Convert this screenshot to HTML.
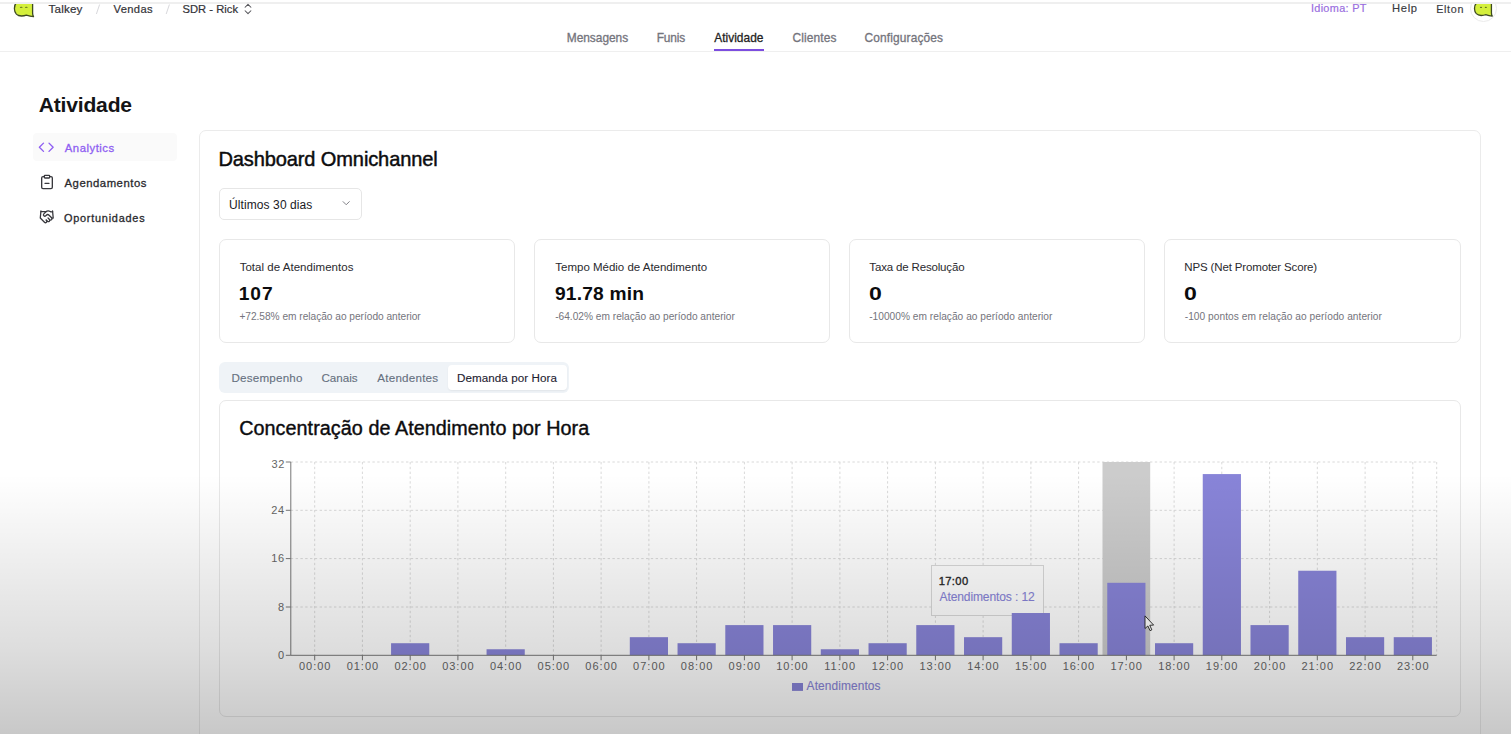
<!DOCTYPE html>
<html><head><meta charset="utf-8"><style>
html,body{margin:0;padding:0;}
body{width:1511px;height:734px;overflow:hidden;position:relative;background:#fff;font-family:"Liberation Sans",sans-serif;}
.abs{position:absolute;}
.t{position:absolute;white-space:nowrap;}
.ax{color:#666;}
</style></head><body>
<!-- top strip -->
<div class="abs" style="left:0;top:51px;width:1511px;height:1px;background:#efefef"></div>
<!-- logo -->
<svg class="abs" style="left:0;top:0" width="40" height="20" viewBox="0 0 40 20">
<path d="M16.8,2 C15,4 14.4,6.2 14.4,8.6 C14.4,13 17.3,16 21.5,16 C23.5,16 25.3,15.6 26.3,15.2 C28.5,15.9 31,16.5 33.5,16.6 C32.9,15.6 32.6,14.6 32.6,13 L32.6,2 Z" fill="#d4ef3c" stroke="#3e4a22" stroke-width="1.3" stroke-linejoin="round"/>
<ellipse cx="21.2" cy="7.2" rx="1.4" ry="0.55" fill="#56661e"/><ellipse cx="26.3" cy="7.2" rx="1.4" ry="0.55" fill="#56661e"/>
</svg>
<div class="abs" style="left:0;top:0;width:1511px;height:2px;background:#fff"></div>
<div class="abs" style="left:0;top:2px;width:1511px;height:2px;background:#efefef"></div>
<!-- separators -->
<svg class="abs" style="left:90px;top:0" width="90" height="20"><line x1="99.6" y1="4.5" x2="96.4" y2="14" stroke="#d8d8dc" stroke-width="1" transform="translate(-90,0)"/><line x1="169.4" y1="4.5" x2="166.2" y2="14" stroke="#d8d8dc" stroke-width="1" transform="translate(-90,0)"/></svg>
<!-- chevron updown -->
<svg class="abs" style="left:240.8px;top:1.6px" width="14" height="14" viewBox="0 0 24 24" fill="none" stroke="#55555a" stroke-width="1.8" stroke-linecap="round" stroke-linejoin="round"><path d="m7 15 5 5 5-5"/><path d="m7 9 5-5 5 5"/></svg>
<!-- avatar -->
<div class="abs" style="left:1469.7px;top:-5.5px;width:25.8px;height:25.8px;border:1px solid #ebebeb;border-radius:50%"></div>
<svg class="abs" style="left:1460px;top:0" width="40" height="20" viewBox="0 0 40 20">
<g transform="translate(14.5,0.6) scale(0.93) translate(-14.4,0)"><path d="M16.8,2 C15,4 14.4,6.2 14.4,8.6 C14.4,13 17.3,16 21.5,16 C23.5,16 25.3,15.6 26.3,15.2 C28.5,15.9 31,16.5 33.5,16.6 C32.9,15.6 32.6,14.6 32.6,13 L32.6,2 Z" fill="#d4ef3c" stroke="#3e4a22" stroke-width="1.4" stroke-linejoin="round"/>
<ellipse cx="21.4" cy="7.2" rx="1.2" ry="0.65" fill="#56661e"/><ellipse cx="26.6" cy="7.2" rx="1.2" ry="0.65" fill="#56661e"/></g>
</svg>
<div class="abs" style="left:1460px;top:0;width:51px;height:2px;background:#fff"></div>
<div class="abs" style="left:1460px;top:2px;width:51px;height:2px;background:#efefef"></div>
<!-- nav underline -->
<div class="abs" style="left:714px;top:49px;width:50px;height:2px;background:#7c4ddf"></div>
<!-- sidebar active -->
<div class="abs" style="left:33px;top:133px;width:144px;height:28px;background:#fafafa;border-radius:4px"></div>
<svg class="abs" style="left:38.3px;top:139.2px" width="16.5" height="16.5" viewBox="0 0 24 24" fill="none" stroke="#8f5ff2" stroke-width="2" stroke-linecap="round" stroke-linejoin="round"><polyline points="16 18 22 12 16 6"/><polyline points="8 6 2 12 8 18"/></svg>
<svg class="abs" style="left:38.5px;top:174.4px" width="16" height="16" viewBox="0 0 24 24" fill="none" stroke="#38383d" stroke-width="2" stroke-linecap="round" stroke-linejoin="round"><rect width="8" height="4" x="8" y="2" rx="1" ry="1"/><path d="M16 4h2a2 2 0 0 1 2 2v14a2 2 0 0 1-2 2H6a2 2 0 0 1-2-2V6a2 2 0 0 1 2-2h2"/><path d="M9 14h6"/></svg>
<svg class="abs" style="left:39.1px;top:209.2px" width="15.5" height="15.5" viewBox="0 0 24 24" fill="none" stroke="#38383d" stroke-width="2" stroke-linecap="round" stroke-linejoin="round"><path d="m11 17 2 2a1 1 0 1 0 3-3"/><path d="m14 14 2.5 2.5a1 1 0 1 0 3-3l-3.88-3.88a3 3 0 0 0-4.24 0l-.88.88a1 1 0 1 1-3-3l2.81-2.81a5.79 5.79 0 0 1 7.06-.87l.47.28a2 2 0 0 0 1.42.25L21 4"/><path d="m21 3 1 11h-2"/><path d="M3 3 2 14l6.5 6.5a1 1 0 1 0 3-3"/><path d="M3 4h8"/></svg>
<!-- main card -->
<div class="abs" style="left:199px;top:130px;width:1280px;height:620px;border:1px solid #ebebeb;border-radius:7px"></div>
<!-- select -->
<div class="abs" style="left:219px;top:188px;width:141px;height:30px;border:1px solid #e6e6e6;border-radius:5px"></div>
<svg class="abs" style="left:339.6px;top:197.4px" width="12.4" height="12.4" viewBox="0 0 24 24" fill="none" stroke="#77777d" stroke-width="1.8" stroke-linecap="round" stroke-linejoin="round"><path d="m6 9 6 6 6-6"/></svg>
<!-- KPI cards -->
<div class="abs" style="left:219px;top:239px;width:294px;height:102px;border:1px solid #e8e8e8;border-radius:7px"></div>
<div class="abs" style="left:534px;top:239px;width:294px;height:102px;border:1px solid #e8e8e8;border-radius:7px"></div>
<div class="abs" style="left:849px;top:239px;width:294px;height:102px;border:1px solid #e8e8e8;border-radius:7px"></div>
<div class="abs" style="left:1164px;top:239px;width:295px;height:102px;border:1px solid #e8e8e8;border-radius:7px"></div>
<!-- tabs -->
<div class="abs" style="left:219px;top:362px;width:350px;height:31px;background:#eff3f7;border-radius:6px"></div>
<div class="abs" style="left:448px;top:365px;width:119px;height:25px;background:#fff;border-radius:4px;box-shadow:0 1px 2px rgba(0,0,0,0.06)"></div>
<!-- chart card -->
<div class="abs" style="left:219px;top:400px;width:1240px;height:315px;border:1px solid #e8e8e8;border-radius:7px"></div>
<svg class="abs" style="left:0;top:0" width="1511" height="734" viewBox="0 0 1511 734">
<line x1="290.8" y1="462.0" x2="1436.7" y2="462.0" stroke="#d9d9d9" stroke-dasharray="2.4 2.4" stroke-width="1"/>
<line x1="290.8" y1="510.3" x2="1436.7" y2="510.3" stroke="#d9d9d9" stroke-dasharray="2.4 2.4" stroke-width="1"/>
<line x1="290.8" y1="558.6" x2="1436.7" y2="558.6" stroke="#d9d9d9" stroke-dasharray="2.4 2.4" stroke-width="1"/>
<line x1="290.8" y1="607.0" x2="1436.7" y2="607.0" stroke="#d9d9d9" stroke-dasharray="2.4 2.4" stroke-width="1"/>
<line x1="314.7" y1="462.0" x2="314.7" y2="655.3" stroke="#d9d9d9" stroke-dasharray="2.4 2.4" stroke-width="1"/>
<line x1="362.4" y1="462.0" x2="362.4" y2="655.3" stroke="#d9d9d9" stroke-dasharray="2.4 2.4" stroke-width="1"/>
<line x1="410.2" y1="462.0" x2="410.2" y2="655.3" stroke="#d9d9d9" stroke-dasharray="2.4 2.4" stroke-width="1"/>
<line x1="457.9" y1="462.0" x2="457.9" y2="655.3" stroke="#d9d9d9" stroke-dasharray="2.4 2.4" stroke-width="1"/>
<line x1="505.7" y1="462.0" x2="505.7" y2="655.3" stroke="#d9d9d9" stroke-dasharray="2.4 2.4" stroke-width="1"/>
<line x1="553.4" y1="462.0" x2="553.4" y2="655.3" stroke="#d9d9d9" stroke-dasharray="2.4 2.4" stroke-width="1"/>
<line x1="601.1" y1="462.0" x2="601.1" y2="655.3" stroke="#d9d9d9" stroke-dasharray="2.4 2.4" stroke-width="1"/>
<line x1="648.9" y1="462.0" x2="648.9" y2="655.3" stroke="#d9d9d9" stroke-dasharray="2.4 2.4" stroke-width="1"/>
<line x1="696.6" y1="462.0" x2="696.6" y2="655.3" stroke="#d9d9d9" stroke-dasharray="2.4 2.4" stroke-width="1"/>
<line x1="744.4" y1="462.0" x2="744.4" y2="655.3" stroke="#d9d9d9" stroke-dasharray="2.4 2.4" stroke-width="1"/>
<line x1="792.1" y1="462.0" x2="792.1" y2="655.3" stroke="#d9d9d9" stroke-dasharray="2.4 2.4" stroke-width="1"/>
<line x1="839.9" y1="462.0" x2="839.9" y2="655.3" stroke="#d9d9d9" stroke-dasharray="2.4 2.4" stroke-width="1"/>
<line x1="887.6" y1="462.0" x2="887.6" y2="655.3" stroke="#d9d9d9" stroke-dasharray="2.4 2.4" stroke-width="1"/>
<line x1="935.4" y1="462.0" x2="935.4" y2="655.3" stroke="#d9d9d9" stroke-dasharray="2.4 2.4" stroke-width="1"/>
<line x1="983.1" y1="462.0" x2="983.1" y2="655.3" stroke="#d9d9d9" stroke-dasharray="2.4 2.4" stroke-width="1"/>
<line x1="1030.9" y1="462.0" x2="1030.9" y2="655.3" stroke="#d9d9d9" stroke-dasharray="2.4 2.4" stroke-width="1"/>
<line x1="1078.6" y1="462.0" x2="1078.6" y2="655.3" stroke="#d9d9d9" stroke-dasharray="2.4 2.4" stroke-width="1"/>
<line x1="1126.4" y1="462.0" x2="1126.4" y2="655.3" stroke="#d9d9d9" stroke-dasharray="2.4 2.4" stroke-width="1"/>
<line x1="1174.1" y1="462.0" x2="1174.1" y2="655.3" stroke="#d9d9d9" stroke-dasharray="2.4 2.4" stroke-width="1"/>
<line x1="1221.8" y1="462.0" x2="1221.8" y2="655.3" stroke="#d9d9d9" stroke-dasharray="2.4 2.4" stroke-width="1"/>
<line x1="1269.6" y1="462.0" x2="1269.6" y2="655.3" stroke="#d9d9d9" stroke-dasharray="2.4 2.4" stroke-width="1"/>
<line x1="1317.3" y1="462.0" x2="1317.3" y2="655.3" stroke="#d9d9d9" stroke-dasharray="2.4 2.4" stroke-width="1"/>
<line x1="1365.1" y1="462.0" x2="1365.1" y2="655.3" stroke="#d9d9d9" stroke-dasharray="2.4 2.4" stroke-width="1"/>
<line x1="1412.8" y1="462.0" x2="1412.8" y2="655.3" stroke="#d9d9d9" stroke-dasharray="2.4 2.4" stroke-width="1"/>
<line x1="1436.7" y1="462.0" x2="1436.7" y2="655.3" stroke="#d9d9d9" stroke-dasharray="2.4 2.4" stroke-width="1"/>
<rect x="1102.5" y="462.0" width="47.7" height="193.3" fill="#cccccc"/>
</svg>
<!-- tooltip -->
<div class="abs" style="left:931px;top:565px;width:111px;height:49px;background:#fff;border:1px solid #d9d9d9"></div>
<svg class="abs" style="left:0;top:0" width="1511" height="734" viewBox="0 0 1511 734">
<rect x="391.07" y="643.22" width="38.20" height="12.08" fill="#8884d8"/>
<rect x="486.56" y="649.26" width="38.20" height="6.04" fill="#8884d8"/>
<rect x="629.80" y="637.18" width="38.20" height="18.12" fill="#8884d8"/>
<rect x="677.54" y="643.22" width="38.20" height="12.08" fill="#8884d8"/>
<rect x="725.29" y="625.10" width="38.20" height="30.20" fill="#8884d8"/>
<rect x="773.03" y="625.10" width="38.20" height="30.20" fill="#8884d8"/>
<rect x="820.78" y="649.26" width="38.20" height="6.04" fill="#8884d8"/>
<rect x="868.52" y="643.22" width="38.20" height="12.08" fill="#8884d8"/>
<rect x="916.27" y="625.10" width="38.20" height="30.20" fill="#8884d8"/>
<rect x="964.02" y="637.18" width="38.20" height="18.12" fill="#8884d8"/>
<rect x="1011.76" y="613.02" width="38.20" height="42.28" fill="#8884d8"/>
<rect x="1059.51" y="643.22" width="38.20" height="12.08" fill="#8884d8"/>
<rect x="1107.25" y="582.81" width="38.20" height="72.49" fill="#8884d8"/>
<rect x="1155.00" y="643.22" width="38.20" height="12.08" fill="#8884d8"/>
<rect x="1202.75" y="474.08" width="38.20" height="181.22" fill="#8884d8"/>
<rect x="1250.49" y="625.10" width="38.20" height="30.20" fill="#8884d8"/>
<rect x="1298.24" y="570.73" width="38.20" height="84.57" fill="#8884d8"/>
<rect x="1345.98" y="637.18" width="38.20" height="18.12" fill="#8884d8"/>
<rect x="1393.73" y="637.18" width="38.20" height="18.12" fill="#8884d8"/>
<line x1="290.8" y1="462.0" x2="290.8" y2="655.3" stroke="#777" stroke-width="1"/>
<line x1="290.8" y1="655.3" x2="1436.7" y2="655.3" stroke="#777" stroke-width="1"/>
<line x1="285.8" y1="462.0" x2="290.8" y2="462.0" stroke="#777" stroke-width="1"/>
<line x1="285.8" y1="510.3" x2="290.8" y2="510.3" stroke="#777" stroke-width="1"/>
<line x1="285.8" y1="558.6" x2="290.8" y2="558.6" stroke="#777" stroke-width="1"/>
<line x1="285.8" y1="607.0" x2="290.8" y2="607.0" stroke="#777" stroke-width="1"/>
<line x1="285.8" y1="655.3" x2="290.8" y2="655.3" stroke="#777" stroke-width="1"/>
<line x1="314.7" y1="655.3" x2="314.7" y2="660.3" stroke="#777" stroke-width="1"/>
<line x1="362.4" y1="655.3" x2="362.4" y2="660.3" stroke="#777" stroke-width="1"/>
<line x1="410.2" y1="655.3" x2="410.2" y2="660.3" stroke="#777" stroke-width="1"/>
<line x1="457.9" y1="655.3" x2="457.9" y2="660.3" stroke="#777" stroke-width="1"/>
<line x1="505.7" y1="655.3" x2="505.7" y2="660.3" stroke="#777" stroke-width="1"/>
<line x1="553.4" y1="655.3" x2="553.4" y2="660.3" stroke="#777" stroke-width="1"/>
<line x1="601.1" y1="655.3" x2="601.1" y2="660.3" stroke="#777" stroke-width="1"/>
<line x1="648.9" y1="655.3" x2="648.9" y2="660.3" stroke="#777" stroke-width="1"/>
<line x1="696.6" y1="655.3" x2="696.6" y2="660.3" stroke="#777" stroke-width="1"/>
<line x1="744.4" y1="655.3" x2="744.4" y2="660.3" stroke="#777" stroke-width="1"/>
<line x1="792.1" y1="655.3" x2="792.1" y2="660.3" stroke="#777" stroke-width="1"/>
<line x1="839.9" y1="655.3" x2="839.9" y2="660.3" stroke="#777" stroke-width="1"/>
<line x1="887.6" y1="655.3" x2="887.6" y2="660.3" stroke="#777" stroke-width="1"/>
<line x1="935.4" y1="655.3" x2="935.4" y2="660.3" stroke="#777" stroke-width="1"/>
<line x1="983.1" y1="655.3" x2="983.1" y2="660.3" stroke="#777" stroke-width="1"/>
<line x1="1030.9" y1="655.3" x2="1030.9" y2="660.3" stroke="#777" stroke-width="1"/>
<line x1="1078.6" y1="655.3" x2="1078.6" y2="660.3" stroke="#777" stroke-width="1"/>
<line x1="1126.4" y1="655.3" x2="1126.4" y2="660.3" stroke="#777" stroke-width="1"/>
<line x1="1174.1" y1="655.3" x2="1174.1" y2="660.3" stroke="#777" stroke-width="1"/>
<line x1="1221.8" y1="655.3" x2="1221.8" y2="660.3" stroke="#777" stroke-width="1"/>
<line x1="1269.6" y1="655.3" x2="1269.6" y2="660.3" stroke="#777" stroke-width="1"/>
<line x1="1317.3" y1="655.3" x2="1317.3" y2="660.3" stroke="#777" stroke-width="1"/>
<line x1="1365.1" y1="655.3" x2="1365.1" y2="660.3" stroke="#777" stroke-width="1"/>
<line x1="1412.8" y1="655.3" x2="1412.8" y2="660.3" stroke="#777" stroke-width="1"/>
</svg>
<svg class="abs" style="left:791.5px;top:683.1px" width="11.1" height="7.9"><rect x="0" y="0" width="11.1" height="7.9" fill="#8884d8"/></svg>
<div class="t ax" style="left:271.44px;top:458px;font-size:11.0px;line-height:12px;letter-spacing:0.6px">32</div>
<div class="t ax" style="left:271.22px;top:504px;font-size:11.0px;line-height:12px;letter-spacing:0.6px">24</div>
<div class="t ax" style="left:271.33px;top:552px;font-size:11.0px;line-height:12px;letter-spacing:0.6px">16</div>
<div class="t ax" style="left:278.03px;top:601px;font-size:11.0px;line-height:12px;letter-spacing:0.6px">8</div>
<div class="t ax" style="left:277.98px;top:649px;font-size:11.0px;line-height:12px;letter-spacing:0.6px">0</div>
<div class="t ax" style="left:298.90px;top:660px;font-size:11.0px;line-height:12px;letter-spacing:1.0px">00:00</div>
<div class="t ax" style="left:346.64px;top:660px;font-size:11.0px;line-height:12px;letter-spacing:1.0px">01:00</div>
<div class="t ax" style="left:394.39px;top:660px;font-size:11.0px;line-height:12px;letter-spacing:1.0px">02:00</div>
<div class="t ax" style="left:442.13px;top:660px;font-size:11.0px;line-height:12px;letter-spacing:1.0px">03:00</div>
<div class="t ax" style="left:489.88px;top:660px;font-size:11.0px;line-height:12px;letter-spacing:1.0px">04:00</div>
<div class="t ax" style="left:537.62px;top:660px;font-size:11.0px;line-height:12px;letter-spacing:1.0px">05:00</div>
<div class="t ax" style="left:585.37px;top:660px;font-size:11.0px;line-height:12px;letter-spacing:1.0px">06:00</div>
<div class="t ax" style="left:633.12px;top:660px;font-size:11.0px;line-height:12px;letter-spacing:1.0px">07:00</div>
<div class="t ax" style="left:680.86px;top:660px;font-size:11.0px;line-height:12px;letter-spacing:1.0px">08:00</div>
<div class="t ax" style="left:728.61px;top:660px;font-size:11.0px;line-height:12px;letter-spacing:1.0px">09:00</div>
<div class="t ax" style="left:776.16px;top:660px;font-size:11.0px;line-height:12px;letter-spacing:1.0px">10:00</div>
<div class="t ax" style="left:824.32px;top:660px;font-size:11.0px;line-height:12px;letter-spacing:1.0px">11:00</div>
<div class="t ax" style="left:871.65px;top:660px;font-size:11.0px;line-height:12px;letter-spacing:1.0px">12:00</div>
<div class="t ax" style="left:919.40px;top:660px;font-size:11.0px;line-height:12px;letter-spacing:1.0px">13:00</div>
<div class="t ax" style="left:967.14px;top:660px;font-size:11.0px;line-height:12px;letter-spacing:1.0px">14:00</div>
<div class="t ax" style="left:1014.89px;top:660px;font-size:11.0px;line-height:12px;letter-spacing:1.0px">15:00</div>
<div class="t ax" style="left:1062.64px;top:660px;font-size:11.0px;line-height:12px;letter-spacing:1.0px">16:00</div>
<div class="t ax" style="left:1110.38px;top:660px;font-size:11.0px;line-height:12px;letter-spacing:1.0px">17:00</div>
<div class="t ax" style="left:1158.13px;top:660px;font-size:11.0px;line-height:12px;letter-spacing:1.0px">18:00</div>
<div class="t ax" style="left:1205.87px;top:660px;font-size:11.0px;line-height:12px;letter-spacing:1.0px">19:00</div>
<div class="t ax" style="left:1253.76px;top:660px;font-size:11.0px;line-height:12px;letter-spacing:1.0px">20:00</div>
<div class="t ax" style="left:1301.50px;top:660px;font-size:11.0px;line-height:12px;letter-spacing:1.0px">21:00</div>
<div class="t ax" style="left:1349.25px;top:660px;font-size:11.0px;line-height:12px;letter-spacing:1.0px">22:00</div>
<div class="t ax" style="left:1396.99px;top:660px;font-size:11.0px;line-height:12px;letter-spacing:1.0px">23:00</div>
<div class="t" style="left:48.57px;top:2px;font-size:11.63px;line-height:13px;letter-spacing:0.173px;font-weight:400;color:#333338;-webkit-text-stroke:0.2px currentColor;">Talkey</div>
<div class="t" style="left:113.44px;top:3px;font-size:11.19px;line-height:12px;letter-spacing:0.365px;font-weight:400;color:#333338;-webkit-text-stroke:0.2px currentColor;">Vendas</div>
<div class="t" style="left:182.5px;top:3px;font-size:11.19px;line-height:12px;letter-spacing:0.029px;font-weight:400;color:#333338;-webkit-text-stroke:0.2px currentColor;">SDR - Rick</div>
<div class="t" style="left:1310.92px;top:2px;font-size:10.9px;line-height:12px;letter-spacing:0.321px;font-weight:400;color:#9a6ee0;-webkit-text-stroke:0.2px currentColor;">Idioma: PT</div>
<div class="t" style="left:1392.1px;top:2px;font-size:11.19px;line-height:12px;letter-spacing:0.648px;font-weight:400;color:#3a3a40;-webkit-text-stroke:0.15px currentColor;">Help</div>
<div class="t" style="left:1436.14px;top:3px;font-size:10.76px;line-height:12px;letter-spacing:0.684px;font-weight:400;color:#3a3a40;-webkit-text-stroke:0.15px currentColor;">Elton</div>
<div class="t" style="left:566.75px;top:31px;font-size:11.92px;line-height:14px;letter-spacing:-0.019px;font-weight:400;color:#74747c;-webkit-text-stroke:0.3px currentColor;">Mensagens</div>
<div class="t" style="left:656.75px;top:31px;font-size:11.92px;line-height:14px;letter-spacing:-0.193px;font-weight:400;color:#74747c;-webkit-text-stroke:0.3px currentColor;">Funis</div>
<div class="t" style="left:714.2px;top:31px;font-size:11.92px;line-height:14px;letter-spacing:0.036px;font-weight:400;color:#1f1f23;-webkit-text-stroke:0.3px currentColor;">Atividade</div>
<div class="t" style="left:792.4px;top:31px;font-size:11.92px;line-height:14px;letter-spacing:0.147px;font-weight:400;color:#74747c;-webkit-text-stroke:0.3px currentColor;">Clientes</div>
<div class="t" style="left:864.6px;top:31px;font-size:11.92px;line-height:14px;letter-spacing:0.137px;font-weight:400;color:#74747c;-webkit-text-stroke:0.3px currentColor;">Configurações</div>
<div class="t" style="left:38.67px;top:93px;font-size:21.08px;line-height:23px;letter-spacing:-0.184px;font-weight:700;color:#141416;">Atividade</div>
<div class="t" style="left:64.8px;top:142px;font-size:11.34px;line-height:12px;letter-spacing:0.506px;font-weight:400;color:#8f5ff2;-webkit-text-stroke:0.3px currentColor;">Analytics</div>
<div class="t" style="left:64.5px;top:177px;font-size:11.34px;line-height:12px;letter-spacing:0.514px;font-weight:400;color:#2a2a2e;-webkit-text-stroke:0.3px currentColor;">Agendamentos</div>
<div class="t" style="left:64.01px;top:212px;font-size:10.9px;line-height:12px;letter-spacing:0.763px;font-weight:400;color:#2a2a2e;-webkit-text-stroke:0.3px currentColor;">Oportunidades</div>
<div class="t" style="left:218.4px;top:148px;font-size:20.06px;line-height:22px;letter-spacing:-0.122px;font-weight:400;color:#0c0c0e;-webkit-text-stroke:0.45px currentColor;">Dashboard Omnichannel</div>
<div class="t" style="left:229.1px;top:198px;font-size:12.0px;line-height:14px;letter-spacing:0.086px;font-weight:400;color:#1a1a1e;">Últimos 30 dias</div>
<div class="t" style="left:239.67px;top:261px;font-size:11.5px;line-height:12px;letter-spacing:0.029px;font-weight:400;color:#2a2a2e;">Total de Atendimentos</div>
<div class="t" style="left:238.75px;top:283px;font-size:19.19px;line-height:21px;letter-spacing:0.937px;font-weight:700;color:#0c0c0e;">107</div>
<div class="t" style="left:239.39px;top:311px;font-size:10.17px;line-height:11px;letter-spacing:-0.019px;font-weight:400;color:#74747c;">+72.58% em relação ao período anterior</div>
<div class="t" style="left:555.37px;top:261px;font-size:11.5px;line-height:12px;letter-spacing:-0.014px;font-weight:400;color:#2a2a2e;">Tempo Médio de Atendimento</div>
<div class="t" style="left:554.93px;top:283px;font-size:19.19px;line-height:21px;letter-spacing:0.191px;font-weight:700;color:#0c0c0e;">91.78 min</div>
<div class="t" style="left:555.14px;top:311px;font-size:10.17px;line-height:11px;letter-spacing:0.005px;font-weight:400;color:#74747c;">-64.02% em relação ao período anterior</div>
<div class="t" style="left:869.37px;top:261px;font-size:11.5px;line-height:12px;letter-spacing:-0.164px;font-weight:400;color:#2a2a2e;">Taxa de Resolução</div>
<div class="t" style="left:868.83px;top:283px;font-size:19.19px;line-height:21px;letter-spacing:2.787px;font-weight:700;color:#0c0c0e;transform:scaleX(1.2);transform-origin:0 0;">0</div>
<div class="t" style="left:869.14px;top:311px;font-size:10.17px;line-height:11px;letter-spacing:0.025px;font-weight:400;color:#74747c;">-10000% em relação ao período anterior</div>
<div class="t" style="left:1184.28px;top:261px;font-size:11.5px;line-height:12px;letter-spacing:-0.139px;font-weight:400;color:#2a2a2e;">NPS (Net Promoter Score)</div>
<div class="t" style="left:1184.43px;top:283px;font-size:19.19px;line-height:21px;letter-spacing:2.687px;font-weight:700;color:#0c0c0e;transform:scaleX(1.2);transform-origin:0 0;">0</div>
<div class="t" style="left:1184.74px;top:311px;font-size:10.17px;line-height:11px;letter-spacing:0.045px;font-weight:400;color:#74747c;">-100 pontos em relação ao período anterior</div>
<div class="t" style="left:231.47px;top:371px;font-size:11.63px;line-height:13px;letter-spacing:0.207px;font-weight:400;color:#66707f;-webkit-text-stroke:0.12px currentColor;">Desempenho</div>
<div class="t" style="left:321.42px;top:371px;font-size:11.63px;line-height:13px;letter-spacing:-0.007px;font-weight:400;color:#66707f;-webkit-text-stroke:0.12px currentColor;">Canais</div>
<div class="t" style="left:377.3px;top:371px;font-size:11.63px;line-height:13px;letter-spacing:0.219px;font-weight:400;color:#66707f;-webkit-text-stroke:0.12px currentColor;">Atendentes</div>
<div class="t" style="left:457.07px;top:371px;font-size:11.63px;line-height:13px;letter-spacing:0.062px;font-weight:400;color:#1c2130;-webkit-text-stroke:0.1px currentColor;">Demanda por Hora</div>
<div class="t" style="left:239.21px;top:417px;font-size:19.77px;line-height:22px;letter-spacing:0.048px;font-weight:400;color:#0c0c0e;-webkit-text-stroke:0.4px currentColor;">Concentração de Atendimento por Hora</div>
<div class="t" style="left:806.6px;top:679px;font-size:11.92px;line-height:14px;letter-spacing:0.103px;font-weight:400;color:#8884d8;-webkit-text-stroke:0.12px currentColor;">Atendimentos</div>
<div class="t" style="left:938.66px;top:575px;font-size:11.19px;line-height:12px;letter-spacing:0.363px;font-weight:400;color:#262626;-webkit-text-stroke:0.35px currentColor;">17:00</div>
<div class="t" style="left:939.5px;top:590px;font-size:12.06px;line-height:14px;letter-spacing:-0.121px;font-weight:400;color:#8884d8;-webkit-text-stroke:0.12px currentColor;">Atendimentos : 12</div>
<!-- cursor -->
<svg class="abs" style="left:1142.5px;top:614.8px" width="13" height="18" viewBox="0 0 14 20"><path d="M2,1 L2,15 L5.2,12.2 L7.6,17.4 L9.6,16.5 L7.3,11.4 L11.6,11.2 Z" fill="#fff" stroke="#222" stroke-width="1" stroke-linejoin="round"/></svg>
<!-- video gradient overlay -->
<div class="abs" style="left:0;top:0;width:1511px;height:734px;pointer-events:none;background:linear-gradient(to bottom, rgba(0,0,0,0) 0px, rgba(0,0,0,0) 474px, rgba(0,0,0,0.025) 505px, rgba(0,0,0,0.065) 560px, rgba(0,0,0,0.135) 650px, rgba(0,0,0,0.215) 734px)"></div>
</body></html>
